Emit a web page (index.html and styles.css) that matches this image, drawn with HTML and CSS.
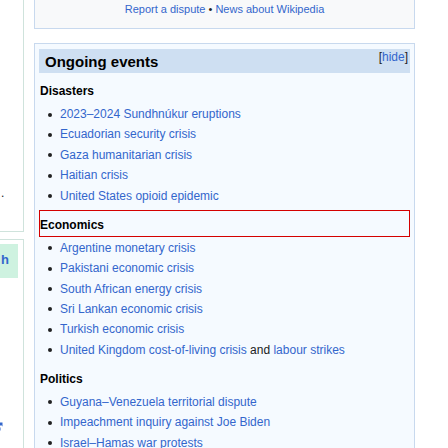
FILE: index.html
```html
<!DOCTYPE html>
<html>
<head>
<meta charset="utf-8">
<link rel="stylesheet" href="styles.css">
</head>
<body>
<div class="page">
  <aside class="side">
    <div class="side-box side-box-top">
      <p class="side-text">.</p>
    </div>
    <div class="side-box side-box-bottom">
      <div class="side-head">h</div>
      <div class="side-icon">
        <svg width="10" height="10" viewBox="0 0 10 10"><path d="M1.5 2.5h3v1h-2v4h4v-2h1v3h-6z" fill="#36c"/><path d="M5.5 0.5h4v4l-1.5-1.5-2.5 2.5-1-1 2.5-2.5z" fill="#36c"/></svg>
      </div>
    </div>
  </aside>
  <main class="main">
    <div class="news-links">
      <a href="#">Report a dispute</a> <span class="dot">•</span> <a href="#">News about Wikipedia</a>
    </div>
    <section class="ongoing">
      <div class="ongoing-head">
        <h2 class="ongoing-title">Ongoing events</h2>
        <span class="hide">[<a href="#">hide</a>]</span>
      </div>
      <h3 class="cat cat-first">Disasters</h3>
      <ul class="items">
        <li><a href="#">2023–2024 Sundhnúkur eruptions</a></li>
        <li><a href="#">Ecuadorian security crisis</a></li>
        <li><a href="#">Gaza humanitarian crisis</a></li>
        <li><a href="#">Haitian crisis</a></li>
        <li><a href="#">United States opioid epidemic</a></li>
      </ul>
      <h3 class="cat focused">Economics</h3>
      <ul class="items">
        <li><a href="#">Argentine monetary crisis</a></li>
        <li><a href="#">Pakistani economic crisis</a></li>
        <li><a href="#">South African energy crisis</a></li>
        <li><a href="#">Sri Lankan economic crisis</a></li>
        <li><a href="#">Turkish economic crisis</a></li>
        <li><a href="#">United Kingdom cost-of-living crisis</a> and <a href="#">labour strikes</a></li>
      </ul>
      <h3 class="cat">Politics</h3>
      <ul class="items">
        <li><a href="#">Guyana–Venezuela territorial dispute</a></li>
        <li><a href="#">Impeachment inquiry against Joe Biden</a></li>
        <li><a href="#">Israel–Hamas war protests</a></li>
      </ul>
    </section>
  </main>
</div>
</body>
</html>
```
FILE: styles.css
```css
html, body {
  margin: 0;
  padding: 0;
  background: #ffffff;
}
body {
  font-family: "Liberation Sans", Arial, sans-serif;
  color: #202122;
  font-size: 12px;
  overflow: hidden;
}
a {
  color: #3366cc;
  text-decoration: none;
}
.page {
  display: flex;
  align-items: flex-start;
  gap: 10px;
}
.side {
  width: 24px;
  flex: 0 0 24px;
  overflow: hidden;
}
.side-box {
  box-sizing: border-box;
  border-right: 1px solid #cfe3dc;
}
.side-box-top {
  height: 232px;
  border-bottom: 1px solid #cfe3dc;
  padding-top: 185px;
}
.side-text {
  margin: 0 0 0 1px;
  line-height: 16px;
}
.side-box-bottom {
  margin-top: 7px;
  border-top: 1px solid #cfe3dc;
  padding-top: 4px;
  height: 260px;
}
.side-head {
  width: 18px;
  height: 34px;
  background: #cef2e0;
  color: #3366cc;
  font-weight: bold;
  font-size: 13px;
  line-height: 14px;
  padding-top: 9px;
  box-sizing: border-box;
  padding-left: 1px;
}
.side-icon {
  margin-top: 144px;
  margin-left: -7px;
  height: 10px;
  line-height: 0;
}
.main {
  width: 381px;
  flex: 0 0 381px;
}
.news-links {
  margin-top: -5px;
  border: 1px solid #c8d9ee;
  background: #f8f9fa;
  text-align: center;
  font-size: 11px;
  line-height: 16px;
  padding: 5px 0 11px;
}
.dot {
  color: #202122;
}
.ongoing {
  margin-top: 14px;
  border: 1px solid #c8d9ee;
  background: #f5faff;
  padding: 5px 4px 0;
}
.ongoing-head {
  display: flex;
  justify-content: space-between;
  align-items: flex-start;
  background: #cedff2;
  height: 24px;
}
.ongoing-title {
  margin: 0;
  padding-left: 6px;
  font-size: 15px;
  font-weight: bold;
  line-height: 23px;
  padding-top: 1px;
  color: #000;
}
.hide {
  font-size: 12px;
  line-height: 16px;
  padding-right: 2px;
  color: #202122;
}
.cat {
  margin: 0 1px;
  font-size: 12px;
  font-weight: bold;
  line-height: 19px;
  padding: 5px 0 1px;
  color: #000;
}
.cat-first {
  margin-top: 4px;
}
.focused {
  outline: 1px solid #d40000;
}
.items {
  list-style: none;
  margin: 3px 0 5px 1px;
  padding: 0 0 0 20px;
}
.items li {
  line-height: 19.2px;
  margin-bottom: 1.2px;
  white-space: nowrap;
}
.items li::before {
  content: "";
  display: inline-block;
  width: 4px;
  height: 4px;
  border-radius: 50%;
  background: #202122;
  margin-left: -12px;
  margin-right: 8px;
  vertical-align: 1.5px;
}
```
